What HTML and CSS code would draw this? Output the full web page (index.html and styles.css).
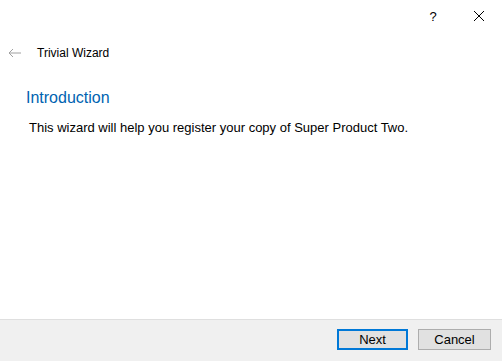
FILE: index.html
```html
<!DOCTYPE html>
<html lang="en">
<head>
    <meta charset="UTF-8">
    <meta name="viewport" content="width=device-width, initial-scale=1.0">
    <title>Trivial Wizard</title>
    <link rel="stylesheet" href="styles.css">
</head>
<body>

<div class="wizard">
    <div class="title-bar">
        <span class="help-btn">?</span>
        <span class="close-btn">
            <svg width="12" height="12" viewBox="0 0 12 12">
                <path d="M1 1 L11 11 M11 1 L1 11" stroke="#000" stroke-width="1" fill="none"/>
            </svg>
        </span>
    </div>

    <div class="header">
        <span class="back-btn">
            <svg width="14" height="10" viewBox="0 0 14 10">
                <path d="M1 5 H13 M5 1 L1 5 L5 9" stroke="#a0a0a0" stroke-width="1" fill="none"/>
            </svg>
        </span>
        <span class="wizard-title">Trivial Wizard</span>
    </div>

    <div class="page">
        <h2 class="page-title">Introduction</h2>
        <p class="page-text">This wizard will help you register your copy of Super Product Two.</p>
    </div>

    <div class="button-bar">
        <button class="btn btn-default">Next</button>
        <button class="btn">Cancel</button>
    </div>
</div>

</body>
</html>
```

FILE: styles.css
```css
html, body {
    margin: 0;
    padding: 0;
    height: 100%;
}
body {
    font-family: "Liberation Sans", Arial, sans-serif;
    background-color: #fff;
    color: #000;
}
.wizard {
    display: flex;
    flex-direction: column;
    height: 361px;
    box-sizing: border-box;
}
.title-bar {
    display: flex;
    justify-content: flex-end;
    align-items: center;
    height: 32px;
}
.help-btn {
    font-size: 13px;
    width: 46px;
    text-align: center;
    color: #000;
}
.close-btn {
    width: 46px;
    display: flex;
    justify-content: center;
    align-items: center;
}
.header {
    display: flex;
    align-items: center;
    height: 42px;
    padding-left: 8px;
}
.back-btn {
    display: flex;
    width: 29px;
}
.wizard-title {
    font-size: 12px;
}
.page {
    flex: 1;
    padding: 15px 26px 0;
}
.page-title {
    margin: 0;
    font-size: 16px;
    font-weight: normal;
    color: #0063b1;
}
.page-text {
    margin: 13px 0 0 3px;
    font-size: 13px;
}
.button-bar {
    display: flex;
    justify-content: flex-end;
    gap: 10px;
    height: 42px;
    padding: 9px 11px 0 0;
    box-sizing: border-box;
    background-color: #f0f0f0;
    border-top: 1px solid #dfdfdf;
}
.btn {
    width: 73px;
    height: 21px;
    font-family: "Liberation Sans", Arial, sans-serif;
    font-size: 13px;
    background-color: #e1e1e1;
    border: 1px solid #adadad;
    padding: 0;
    color: #000;
}
.btn-default {
    width: 71px;
    border: 2px solid #0078d7;
}
```
